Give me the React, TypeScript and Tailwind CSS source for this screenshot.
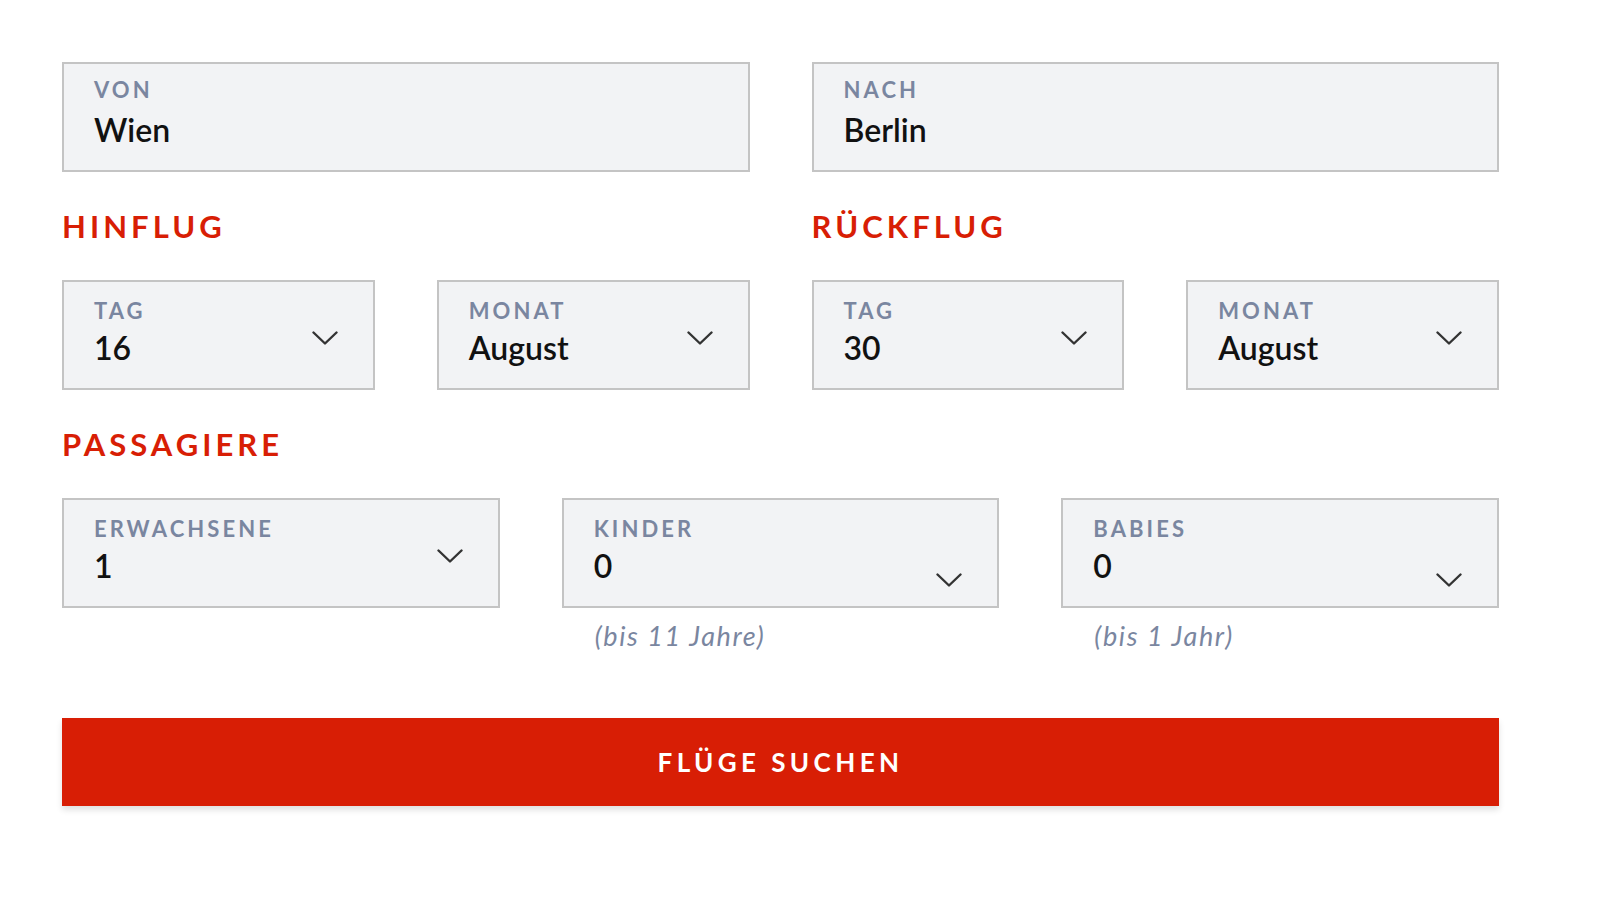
import type { ReactNode } from "react";

const fuente = { fontFamily: "Lato, 'Open Sans', sans-serif" };

function Flecha({ abajo = false }: { abajo?: boolean }) {
  return (
    <svg
      viewBox="0 0 26 14"
      className={`absolute right-[35px] h-[14px] w-[26px] ${abajo ? "top-[73px]" : "top-[49px]"}`}
      fill="none"
      stroke="#333"
      strokeWidth="2.4"
      strokeLinecap="round"
      strokeLinejoin="round"
    >
      <path d="M1.5 1.5 L13 12.5 L24.5 1.5" />
    </svg>
  );
}

function Campo({ etiqueta, valor }: { etiqueta: string; valor: string }) {
  return (
    <div className="h-[110px] border-2 border-[#c4c4c4] bg-[#f2f3f5] px-[30px] pt-[15px]">
      <div className="text-[22px] leading-[22px] font-bold tracking-[0.14em] text-[#7a86a0]">
        {etiqueta}
      </div>
      <div className="mt-[13px] text-[32px] leading-[32px] font-semibold text-[#111]">
        {valor}
      </div>
    </div>
  );
}

function Selector({
  etiqueta,
  valor,
  abajo,
}: {
  etiqueta: string;
  valor: string;
  abajo?: boolean;
}) {
  return (
    <div className="relative h-[110px] border-2 border-[#c4c4c4] bg-[#f2f3f5] px-[30px] pt-[18px]">
      <div className="text-[22px] leading-[22px] font-bold tracking-[0.14em] text-[#7a86a0]">
        {etiqueta}
      </div>
      <div className="mt-[10px] text-[32px] leading-[32px] font-semibold text-[#111]">
        {valor}
      </div>
      <Flecha abajo={abajo} />
    </div>
  );
}

function Titulo({ children }: { children: ReactNode }) {
  return (
    <div className="flex h-[108px] items-center">
      <h2 className="text-[31px] leading-[34px] font-bold tracking-[0.13em] text-[#d81e05]">
        {children}
      </h2>
    </div>
  );
}

function Nota({ children }: { children: ReactNode }) {
  return (
    <p className="mt-[12px] pl-[33px] text-[27px] leading-[32px] italic tracking-[0.06em] text-[#7a86a0]">
      {children}
    </p>
  );
}

export default function App() {
  return (
    <div className="min-h-screen bg-white" style={fuente}>
      <form
        className="ml-[62px] w-[1437px] pt-[62px]"
        onSubmit={(evento) => evento.preventDefault()}
      >
        <div className="grid grid-cols-2 gap-[62px]">
          <Campo etiqueta="VON" valor="Wien" />
          <Campo etiqueta="NACH" valor="Berlin" />
        </div>

        <div className="grid grid-cols-2 gap-[62px]">
          <div>
            <Titulo>HINFLUG</Titulo>
            <div className="grid grid-cols-2 gap-[62px]">
              <Selector etiqueta="TAG" valor="16" />
              <Selector etiqueta="MONAT" valor="August" />
            </div>
          </div>
          <div>
            <Titulo>RÜCKFLUG</Titulo>
            <div className="grid grid-cols-2 gap-[62px]">
              <Selector etiqueta="TAG" valor="30" />
              <Selector etiqueta="MONAT" valor="August" />
            </div>
          </div>
        </div>

        <Titulo>PASSAGIERE</Titulo>
        <div className="grid grid-cols-3 gap-[62px]">
          <div>
            <Selector etiqueta="ERWACHSENE" valor="1" />
          </div>
          <div>
            <Selector etiqueta="KINDER" valor="0" abajo />
            <Nota>(bis 11 Jahre)</Nota>
          </div>
          <div>
            <Selector etiqueta="BABIES" valor="0" abajo />
            <Nota>(bis 1 Jahr)</Nota>
          </div>
        </div>

        <button
          type="submit"
          className="mt-[66px] flex h-[88px] w-full items-center justify-center bg-[#d81e05] text-[26px] font-bold tracking-[0.17em] text-white shadow-[0_4px_6px_rgba(0,0,0,0.12)]"
        >
          FLÜGE SUCHEN
        </button>
      </form>
    </div>
  );
}
